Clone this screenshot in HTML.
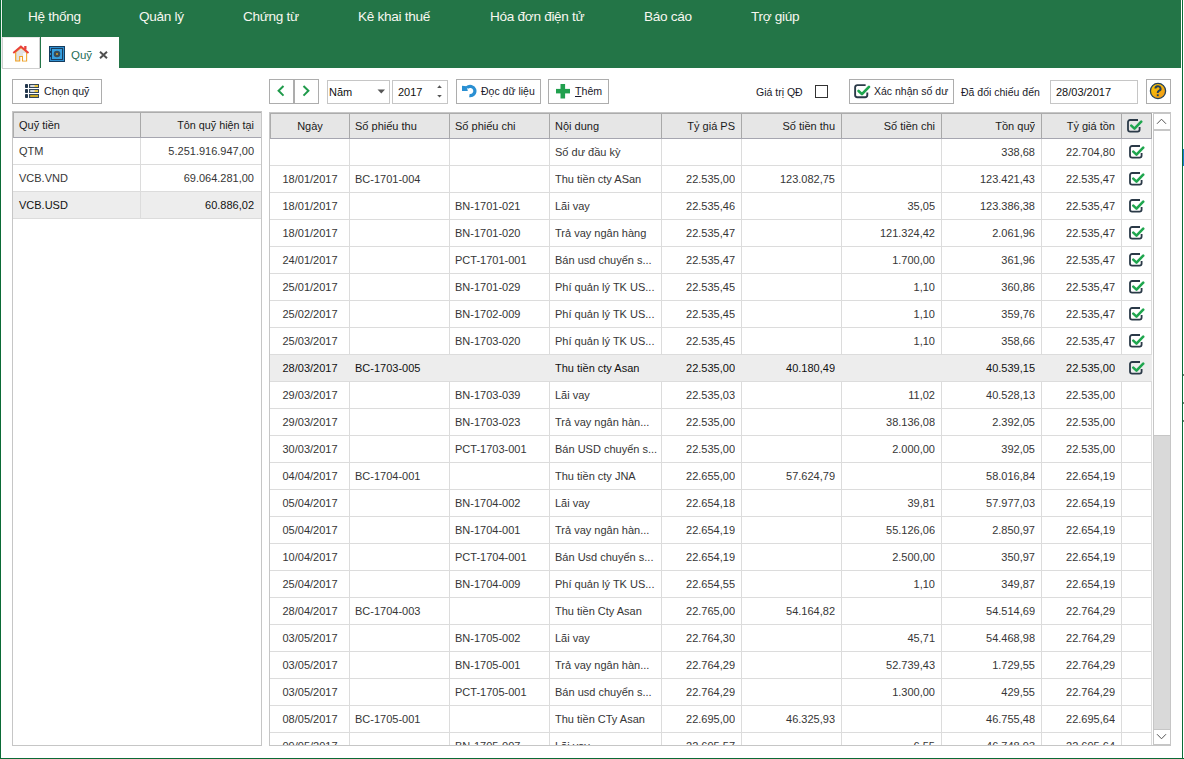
<!DOCTYPE html>
<html><head><meta charset="utf-8">
<style>
*{box-sizing:border-box}
html,body{margin:0;padding:0}
body{width:1184px;height:759px;overflow:hidden;position:relative;background:#fff;font-family:"Liberation Sans",sans-serif;font-size:11px;color:#333}
.a{position:absolute}
.ic{position:absolute;display:block}
.menu{position:absolute;top:9px;font-size:13.6px;letter-spacing:-0.3px;color:#f7f7f0;white-space:nowrap;line-height:16px}
.btn{position:absolute;border:1px solid #adadad;background:#fff;height:25px}
.t{position:absolute;white-space:nowrap;line-height:13px}
.hl{position:absolute;width:1px;background:#a9a9a9}
.vl{position:absolute;width:1px;background:#dcdcdc}
.rl{position:absolute;height:1px;background:#dcdcdc}
.cell{position:absolute;white-space:nowrap;line-height:13px;overflow:hidden}
</style></head><body>

<div class="a" style="left:1px;top:0;width:1px;height:68px;background:#eef0f0"></div>
<div class="a" style="left:2px;top:0;width:1179px;height:68px;background:#237547"></div>
<div class="a" style="left:2px;top:0;width:1px;height:68px;background:#127039"></div>
<div class="menu" style="left:28px">Hệ thống</div>
<div class="menu" style="left:139px">Quản lý</div>
<div class="menu" style="left:243px">Chứng từ</div>
<div class="menu" style="left:358px">Kê khai thuế</div>
<div class="menu" style="left:490px">Hóa đơn điện tử</div>
<div class="menu" style="left:644px">Báo cáo</div>
<div class="menu" style="left:751px">Trợ giúp</div>
<div class="a" style="left:2px;top:37px;width:38px;height:32px;background:#fff;border:1px solid #cfcfcf;border-top-color:#e8e8e8"></div>
<svg class="ic" style="left:10px;top:43px" width="22" height="22" viewBox="0 0 22 22">
<path d="M5.7 9.2V18H9.7V13.5H12.5V18H16.6V9.2L11.1 4.6Z" fill="#e2e2e2" stroke="#f0a020" stroke-width="1.1"/>
<rect x="13.1" y="10" width="3" height="7.5" fill="#fbfbfb"/>
<path d="M3.3 9.9L10.9 3.6L18.5 9.9" stroke="#e8403a" stroke-width="1.9" fill="none"/>
<rect x="14.2" y="3" width="2.3" height="3.6" fill="#e8403a"/>
</svg>
<div class="a" style="left:41px;top:37px;width:78px;height:32px;background:#fff"></div>
<svg class="ic" style="left:49px;top:46px" width="16" height="16" viewBox="0 0 16 16">
<rect x="0.5" y="0.5" width="15" height="15" fill="#2f8fd0" stroke="#153c5e" stroke-width="1"/>
<rect x="2.5" y="2.5" width="11" height="11" fill="#36a0e0" stroke="#1b3d5c" stroke-width="1"/>
<circle cx="8" cy="8" r="3.3" fill="#3a4b58"/>
<circle cx="8" cy="8" r="1.1" fill="#c9a030"/>
<rect x="1" y="5" width="1.5" height="2" fill="#153c5e"/><rect x="1" y="9" width="1.5" height="2" fill="#153c5e"/>
</svg>
<div class="t" style="left:71px;top:49px;font-size:11.5px;color:#1f6e58">Quỹ</div>
<svg class="ic" style="left:99px;top:51px" width="9" height="8" viewBox="0 0 9 8"><path d="M1 0.8L8 7.2M8 0.8L1 7.2" stroke="#505050" stroke-width="2"/></svg>
<div class="btn" style="left:12px;top:79px;width:90px"></div>
<svg class="ic" style="left:25px;top:84px" width="14" height="14" viewBox="0 0 14 14">
<rect x="0" y="0" width="3" height="4" rx="0.8" fill="#22364c"/><rect x="0" y="5" width="3" height="4" rx="0.8" fill="#22364c"/><rect x="0" y="10" width="3" height="4" rx="0.8" fill="#22364c"/>
<rect x="4.6" y="0.6" width="9" height="2.8" fill="#fff" stroke="#34475a" stroke-width="1.2"/><rect x="9.6" y="1.2" width="3.4" height="1.6" fill="#f2c21a"/>
<rect x="4.6" y="5.6" width="9" height="2.8" fill="#fff" stroke="#34475a" stroke-width="1.2"/><rect x="9.6" y="6.2" width="3.4" height="1.6" fill="#f2c21a"/>
<rect x="4.6" y="10.6" width="9" height="2.8" fill="#f2c21a" stroke="#34475a" stroke-width="1.2"/>
</svg>
<div class="t" style="left:44px;top:85px;font-size:10.6px;color:#1a1a2a">Chọn quỹ</div>
<div class="a" style="left:12px;top:111px;width:250px;height:635px;border:1px solid #c6c6c6;background:#fff"></div>
<div class="a" style="left:13px;top:112px;width:248px;height:26px;background:#e6e6e6;border-top:1px solid #acacac;border-left:1px solid #acacac;border-bottom:1px solid #a6a6b0"></div>
<div class="a" style="left:140px;top:113px;width:1px;height:24px;background:#a8a8a8"></div>
<div class="t" style="left:19px;top:119px;color:#1a1a1a">Quỹ tiền</div>
<div class="t" style="left:140px;width:114px;text-align:right;top:119px;color:#1a1a1a;font-size:10.8px">Tôn quỹ hiện tại</div>
<div class="vl" style="left:140px;top:138px;height:26px"></div>
<div class="rl" style="left:13px;top:164px;width:248px"></div>
<div class="t" style="left:19px;top:145px;color:#363636">QTM</div>
<div class="t" style="left:141px;width:113px;text-align:right;top:145px;color:#363636">5.251.916.947,00</div>
<div class="vl" style="left:140px;top:165px;height:26px"></div>
<div class="rl" style="left:13px;top:191px;width:248px"></div>
<div class="t" style="left:19px;top:172px;color:#363636">VCB.VND</div>
<div class="t" style="left:141px;width:113px;text-align:right;top:172px;color:#363636">69.064.281,00</div>
<div class="a" style="left:13px;top:192px;width:248px;height:26px;background:#ededed"></div>
<div class="vl" style="left:140px;top:192px;height:26px"></div>
<div class="rl" style="left:13px;top:218px;width:248px"></div>
<div class="t" style="left:19px;top:199px;color:#111">VCB.USD</div>
<div class="t" style="left:141px;width:113px;text-align:right;top:199px;color:#111">60.886,02</div>
<div class="btn" style="left:269px;top:79px;width:25px"></div>
<div class="btn" style="left:294px;top:79px;width:25px"></div>
<svg class="ic" style="left:277px;top:85px" width="8" height="12" viewBox="0 0 8 12"><path d="M6.5 1L1.6 5.8L6.5 10.6" fill="none" stroke="#1f9a4a" stroke-width="2"/></svg>
<svg class="ic" style="left:302px;top:85px" width="8" height="12" viewBox="0 0 8 12"><path d="M1.5 1L6.4 5.8L1.5 10.6" fill="none" stroke="#1f9a4a" stroke-width="2"/></svg>
<div class="a" style="left:327px;top:80px;width:63px;height:24px;border:1px solid #c6c6c6;background:#fff"></div>
<div class="t" style="left:329px;top:86px;color:#111;font-size:11px">Năm</div>
<svg class="ic" style="left:377px;top:89px" width="9" height="5" viewBox="0 0 9 5"><path d="M0.5 0.5H8L4.25 4.5Z" fill="#555"/></svg>
<div class="a" style="left:392px;top:80px;width:56px;height:24px;border:1px solid #c6c6c6;background:#fff"></div>
<div class="t" style="left:398px;top:86px;color:#111">2017</div>
<svg class="ic" style="left:436px;top:84px" width="7" height="15" viewBox="0 0 7 15"><path d="M1.2 4H5.8L3.5 1.3Z" fill="#555"/><path d="M1.2 11H5.8L3.5 13.6Z" fill="#555"/></svg>
<div class="btn" style="left:456px;top:79px;width:85px"></div>
<svg class="ic" style="left:458px;top:81px" width="20" height="20" viewBox="0 0 20 20">
<path d="M8.88 6.68A4.7 4.7 0 1 1 11.38 14.63" fill="none" stroke="#2a8fd2" stroke-width="3.2"/>
<path d="M4 4.8L8.6 5.2L9.8 10H4Z" fill="#2a8fd2"/>
</svg>
<div class="t" style="left:481px;top:85px;font-size:10.5px;color:#1a1a2a">Đọc dữ liệu</div>
<div class="btn" style="left:548px;top:79px;width:61px"></div>
<svg class="ic" style="left:556px;top:84px" width="14" height="15" viewBox="0 0 14 15">
<rect x="4.5" y="0" width="4.6" height="14.5" fill="#21a04e"/><rect x="0" y="4.9" width="14" height="4.5" fill="#21a04e"/>
</svg>
<div class="t" style="left:575px;top:85px;font-size:10.6px;color:#1a1a2a"><span style="text-decoration:underline">T</span>hêm</div>
<div class="t" style="left:756px;top:86px;font-size:10.5px;color:#1a1a2a">Giá trị QĐ</div>
<div class="a" style="left:815px;top:85px;width:13px;height:13px;border:1px solid #333;background:#fff"></div>
<div class="btn" style="left:849px;top:79px;width:105px"></div>
<svg class="ic" style="left:853px;top:83px" width="17.9" height="16.8" viewBox="0 0 17 16"><path d="M13.6 9V11.5A2.1 2.1 0 0 1 11.5 13.6H4.1A2.1 2.1 0 0 1 2 11.5V4.1A2.1 2.1 0 0 1 4.1 2H12" fill="none" stroke="#2b3a48" stroke-width="1.8"/><path d="M5.3 7.6L8.5 10.6L15.2 3.7" fill="none" stroke="#1fa64e" stroke-width="2.6" stroke-linejoin="round" stroke-linecap="round"/></svg>
<div class="t" style="left:874px;top:85px;font-size:10.5px;color:#1a1a2a">Xác nhận số dư</div>
<div class="t" style="left:961px;top:86px;font-size:10.5px;color:#1a1a2a">Đã đối chiếu đến</div>
<div class="a" style="left:1050px;top:80px;width:88px;height:24px;border:1px solid #c6c6c6;background:#fff"></div>
<div class="t" style="left:1056px;top:86px;color:#111">28/03/2017</div>
<div class="btn" style="left:1146px;top:79px;width:25px"></div>
<svg class="ic" style="left:1149px;top:82px" width="18" height="18" viewBox="0 0 18 18">
<defs><linearGradient id="hg" x1="0" y1="0" x2="1" y2="1"><stop offset="0" stop-color="#f8c800"/><stop offset="1" stop-color="#f0961e"/></linearGradient></defs>
<circle cx="9" cy="9" r="7.6" fill="url(#hg)" stroke="#24405a" stroke-width="1.3"/>
<path d="M6.4 6.6A2.6 2.4 0 1 1 9.8 8.9C9 9.4 8.7 9.9 8.7 11" fill="none" stroke="#24405a" stroke-width="2"/>
<rect x="7.8" y="12.3" width="1.9" height="1.9" fill="#24405a"/>
</svg>
<div class="a" style="left:269px;top:112px;width:902px;height:634px;border:1px solid #c6c6c6;background:#fff"></div>
<div class="a" style="left:270px;top:113px;width:882px;height:26px;background:#e6e6e6;border-top:1px solid #acacac;border-left:1px solid #acacac;border-bottom:1px solid #a6a6b0"></div>
<div class="hl" style="left:349px;top:114px;height:24px"></div>
<div class="cell" style="left:271px;width:78px;text-align:center;top:120px;color:#1a1a1a">Ngày</div>
<div class="hl" style="left:449px;top:114px;height:24px"></div>
<div class="cell" style="left:355px;width:94px;top:120px;color:#1a1a1a">Số phiếu thu</div>
<div class="hl" style="left:549px;top:114px;height:24px"></div>
<div class="cell" style="left:455px;width:94px;top:120px;color:#1a1a1a">Số phiếu chi</div>
<div class="hl" style="left:661px;top:114px;height:24px"></div>
<div class="cell" style="left:555px;width:106px;top:120px;color:#1a1a1a">Nội dung</div>
<div class="hl" style="left:741px;top:114px;height:24px"></div>
<div class="cell" style="left:662px;width:73px;text-align:right;top:120px;color:#1a1a1a">Tỷ giá PS</div>
<div class="hl" style="left:841px;top:114px;height:24px"></div>
<div class="cell" style="left:742px;width:93px;text-align:right;top:120px;color:#1a1a1a">Số tiền thu</div>
<div class="hl" style="left:941px;top:114px;height:24px"></div>
<div class="cell" style="left:842px;width:93px;text-align:right;top:120px;color:#1a1a1a">Số tiền chi</div>
<div class="hl" style="left:1041px;top:114px;height:24px"></div>
<div class="cell" style="left:942px;width:93px;text-align:right;top:120px;color:#1a1a1a">Tồn quỹ</div>
<div class="hl" style="left:1121px;top:114px;height:24px"></div>
<div class="cell" style="left:1042px;width:73px;text-align:right;top:120px;color:#1a1a1a">Tỷ giá tồn</div>
<div class="hl" style="left:1151px;top:114px;height:24px"></div>
<svg class="ic" style="left:1126px;top:118px" width="17.0" height="16.0" viewBox="0 0 17 16"><path d="M13.6 9V11.5A2.1 2.1 0 0 1 11.5 13.6H4.1A2.1 2.1 0 0 1 2 11.5V4.1A2.1 2.1 0 0 1 4.1 2H12" fill="none" stroke="#2b3a48" stroke-width="1.8"/><path d="M5.3 7.6L8.5 10.6L15.2 3.7" fill="none" stroke="#1fa64e" stroke-width="2.6" stroke-linejoin="round" stroke-linecap="round"/></svg>
<div class="vl" style="left:349px;top:139px;height:27px"></div>
<div class="vl" style="left:449px;top:139px;height:27px"></div>
<div class="vl" style="left:549px;top:139px;height:27px"></div>
<div class="vl" style="left:661px;top:139px;height:27px"></div>
<div class="cell" style="left:555px;width:106px;top:146px;color:#363636">Số dư đầu kỳ</div>
<div class="vl" style="left:741px;top:139px;height:27px"></div>
<div class="vl" style="left:841px;top:139px;height:27px"></div>
<div class="vl" style="left:941px;top:139px;height:27px"></div>
<div class="vl" style="left:1041px;top:139px;height:27px"></div>
<div class="cell" style="left:942px;width:93px;text-align:right;top:146px;color:#363636">338,68</div>
<div class="vl" style="left:1121px;top:139px;height:27px"></div>
<div class="cell" style="left:1042px;width:73px;text-align:right;top:146px;color:#363636">22.704,80</div>
<div class="vl" style="left:1151px;top:139px;height:27px"></div>
<svg class="ic" style="left:1128px;top:144px" width="17.0" height="16.0" viewBox="0 0 17 16"><path d="M13.6 9V11.5A2.1 2.1 0 0 1 11.5 13.6H4.1A2.1 2.1 0 0 1 2 11.5V4.1A2.1 2.1 0 0 1 4.1 2H12" fill="none" stroke="#2b3a48" stroke-width="1.8"/><path d="M5.3 7.6L8.5 10.6L15.2 3.7" fill="none" stroke="#1fa64e" stroke-width="2.6" stroke-linejoin="round" stroke-linecap="round"/></svg>
<div class="rl" style="left:270px;top:165px;width:882px"></div>
<div class="vl" style="left:349px;top:166px;height:27px"></div>
<div class="cell" style="left:271px;width:78px;text-align:center;top:173px;color:#363636">18/01/2017</div>
<div class="vl" style="left:449px;top:166px;height:27px"></div>
<div class="cell" style="left:355px;width:94px;top:173px;color:#363636">BC-1701-004</div>
<div class="vl" style="left:549px;top:166px;height:27px"></div>
<div class="vl" style="left:661px;top:166px;height:27px"></div>
<div class="cell" style="left:555px;width:106px;top:173px;color:#363636">Thu tiền cty ASan</div>
<div class="vl" style="left:741px;top:166px;height:27px"></div>
<div class="cell" style="left:662px;width:73px;text-align:right;top:173px;color:#363636">22.535,00</div>
<div class="vl" style="left:841px;top:166px;height:27px"></div>
<div class="cell" style="left:742px;width:93px;text-align:right;top:173px;color:#363636">123.082,75</div>
<div class="vl" style="left:941px;top:166px;height:27px"></div>
<div class="vl" style="left:1041px;top:166px;height:27px"></div>
<div class="cell" style="left:942px;width:93px;text-align:right;top:173px;color:#363636">123.421,43</div>
<div class="vl" style="left:1121px;top:166px;height:27px"></div>
<div class="cell" style="left:1042px;width:73px;text-align:right;top:173px;color:#363636">22.535,47</div>
<div class="vl" style="left:1151px;top:166px;height:27px"></div>
<svg class="ic" style="left:1128px;top:171px" width="17.0" height="16.0" viewBox="0 0 17 16"><path d="M13.6 9V11.5A2.1 2.1 0 0 1 11.5 13.6H4.1A2.1 2.1 0 0 1 2 11.5V4.1A2.1 2.1 0 0 1 4.1 2H12" fill="none" stroke="#2b3a48" stroke-width="1.8"/><path d="M5.3 7.6L8.5 10.6L15.2 3.7" fill="none" stroke="#1fa64e" stroke-width="2.6" stroke-linejoin="round" stroke-linecap="round"/></svg>
<div class="rl" style="left:270px;top:192px;width:882px"></div>
<div class="vl" style="left:349px;top:193px;height:27px"></div>
<div class="cell" style="left:271px;width:78px;text-align:center;top:200px;color:#363636">18/01/2017</div>
<div class="vl" style="left:449px;top:193px;height:27px"></div>
<div class="vl" style="left:549px;top:193px;height:27px"></div>
<div class="cell" style="left:455px;width:94px;top:200px;color:#363636">BN-1701-021</div>
<div class="vl" style="left:661px;top:193px;height:27px"></div>
<div class="cell" style="left:555px;width:106px;top:200px;color:#363636">Lãi vay</div>
<div class="vl" style="left:741px;top:193px;height:27px"></div>
<div class="cell" style="left:662px;width:73px;text-align:right;top:200px;color:#363636">22.535,46</div>
<div class="vl" style="left:841px;top:193px;height:27px"></div>
<div class="vl" style="left:941px;top:193px;height:27px"></div>
<div class="cell" style="left:842px;width:93px;text-align:right;top:200px;color:#363636">35,05</div>
<div class="vl" style="left:1041px;top:193px;height:27px"></div>
<div class="cell" style="left:942px;width:93px;text-align:right;top:200px;color:#363636">123.386,38</div>
<div class="vl" style="left:1121px;top:193px;height:27px"></div>
<div class="cell" style="left:1042px;width:73px;text-align:right;top:200px;color:#363636">22.535,47</div>
<div class="vl" style="left:1151px;top:193px;height:27px"></div>
<svg class="ic" style="left:1128px;top:198px" width="17.0" height="16.0" viewBox="0 0 17 16"><path d="M13.6 9V11.5A2.1 2.1 0 0 1 11.5 13.6H4.1A2.1 2.1 0 0 1 2 11.5V4.1A2.1 2.1 0 0 1 4.1 2H12" fill="none" stroke="#2b3a48" stroke-width="1.8"/><path d="M5.3 7.6L8.5 10.6L15.2 3.7" fill="none" stroke="#1fa64e" stroke-width="2.6" stroke-linejoin="round" stroke-linecap="round"/></svg>
<div class="rl" style="left:270px;top:219px;width:882px"></div>
<div class="vl" style="left:349px;top:220px;height:27px"></div>
<div class="cell" style="left:271px;width:78px;text-align:center;top:227px;color:#363636">18/01/2017</div>
<div class="vl" style="left:449px;top:220px;height:27px"></div>
<div class="vl" style="left:549px;top:220px;height:27px"></div>
<div class="cell" style="left:455px;width:94px;top:227px;color:#363636">BN-1701-020</div>
<div class="vl" style="left:661px;top:220px;height:27px"></div>
<div class="cell" style="left:555px;width:106px;top:227px;color:#363636">Trả vay ngân hàng</div>
<div class="vl" style="left:741px;top:220px;height:27px"></div>
<div class="cell" style="left:662px;width:73px;text-align:right;top:227px;color:#363636">22.535,47</div>
<div class="vl" style="left:841px;top:220px;height:27px"></div>
<div class="vl" style="left:941px;top:220px;height:27px"></div>
<div class="cell" style="left:842px;width:93px;text-align:right;top:227px;color:#363636">121.324,42</div>
<div class="vl" style="left:1041px;top:220px;height:27px"></div>
<div class="cell" style="left:942px;width:93px;text-align:right;top:227px;color:#363636">2.061,96</div>
<div class="vl" style="left:1121px;top:220px;height:27px"></div>
<div class="cell" style="left:1042px;width:73px;text-align:right;top:227px;color:#363636">22.535,47</div>
<div class="vl" style="left:1151px;top:220px;height:27px"></div>
<svg class="ic" style="left:1128px;top:225px" width="17.0" height="16.0" viewBox="0 0 17 16"><path d="M13.6 9V11.5A2.1 2.1 0 0 1 11.5 13.6H4.1A2.1 2.1 0 0 1 2 11.5V4.1A2.1 2.1 0 0 1 4.1 2H12" fill="none" stroke="#2b3a48" stroke-width="1.8"/><path d="M5.3 7.6L8.5 10.6L15.2 3.7" fill="none" stroke="#1fa64e" stroke-width="2.6" stroke-linejoin="round" stroke-linecap="round"/></svg>
<div class="rl" style="left:270px;top:246px;width:882px"></div>
<div class="vl" style="left:349px;top:247px;height:27px"></div>
<div class="cell" style="left:271px;width:78px;text-align:center;top:254px;color:#363636">24/01/2017</div>
<div class="vl" style="left:449px;top:247px;height:27px"></div>
<div class="vl" style="left:549px;top:247px;height:27px"></div>
<div class="cell" style="left:455px;width:94px;top:254px;color:#363636">PCT-1701-001</div>
<div class="vl" style="left:661px;top:247px;height:27px"></div>
<div class="cell" style="left:555px;width:106px;top:254px;color:#363636">Bán usd chuyển s...</div>
<div class="vl" style="left:741px;top:247px;height:27px"></div>
<div class="cell" style="left:662px;width:73px;text-align:right;top:254px;color:#363636">22.535,47</div>
<div class="vl" style="left:841px;top:247px;height:27px"></div>
<div class="vl" style="left:941px;top:247px;height:27px"></div>
<div class="cell" style="left:842px;width:93px;text-align:right;top:254px;color:#363636">1.700,00</div>
<div class="vl" style="left:1041px;top:247px;height:27px"></div>
<div class="cell" style="left:942px;width:93px;text-align:right;top:254px;color:#363636">361,96</div>
<div class="vl" style="left:1121px;top:247px;height:27px"></div>
<div class="cell" style="left:1042px;width:73px;text-align:right;top:254px;color:#363636">22.535,47</div>
<div class="vl" style="left:1151px;top:247px;height:27px"></div>
<svg class="ic" style="left:1128px;top:252px" width="17.0" height="16.0" viewBox="0 0 17 16"><path d="M13.6 9V11.5A2.1 2.1 0 0 1 11.5 13.6H4.1A2.1 2.1 0 0 1 2 11.5V4.1A2.1 2.1 0 0 1 4.1 2H12" fill="none" stroke="#2b3a48" stroke-width="1.8"/><path d="M5.3 7.6L8.5 10.6L15.2 3.7" fill="none" stroke="#1fa64e" stroke-width="2.6" stroke-linejoin="round" stroke-linecap="round"/></svg>
<div class="rl" style="left:270px;top:273px;width:882px"></div>
<div class="vl" style="left:349px;top:274px;height:27px"></div>
<div class="cell" style="left:271px;width:78px;text-align:center;top:281px;color:#363636">25/01/2017</div>
<div class="vl" style="left:449px;top:274px;height:27px"></div>
<div class="vl" style="left:549px;top:274px;height:27px"></div>
<div class="cell" style="left:455px;width:94px;top:281px;color:#363636">BN-1701-029</div>
<div class="vl" style="left:661px;top:274px;height:27px"></div>
<div class="cell" style="left:555px;width:106px;top:281px;color:#363636">Phí quản lý TK US...</div>
<div class="vl" style="left:741px;top:274px;height:27px"></div>
<div class="cell" style="left:662px;width:73px;text-align:right;top:281px;color:#363636">22.535,45</div>
<div class="vl" style="left:841px;top:274px;height:27px"></div>
<div class="vl" style="left:941px;top:274px;height:27px"></div>
<div class="cell" style="left:842px;width:93px;text-align:right;top:281px;color:#363636">1,10</div>
<div class="vl" style="left:1041px;top:274px;height:27px"></div>
<div class="cell" style="left:942px;width:93px;text-align:right;top:281px;color:#363636">360,86</div>
<div class="vl" style="left:1121px;top:274px;height:27px"></div>
<div class="cell" style="left:1042px;width:73px;text-align:right;top:281px;color:#363636">22.535,47</div>
<div class="vl" style="left:1151px;top:274px;height:27px"></div>
<svg class="ic" style="left:1128px;top:279px" width="17.0" height="16.0" viewBox="0 0 17 16"><path d="M13.6 9V11.5A2.1 2.1 0 0 1 11.5 13.6H4.1A2.1 2.1 0 0 1 2 11.5V4.1A2.1 2.1 0 0 1 4.1 2H12" fill="none" stroke="#2b3a48" stroke-width="1.8"/><path d="M5.3 7.6L8.5 10.6L15.2 3.7" fill="none" stroke="#1fa64e" stroke-width="2.6" stroke-linejoin="round" stroke-linecap="round"/></svg>
<div class="rl" style="left:270px;top:300px;width:882px"></div>
<div class="vl" style="left:349px;top:301px;height:27px"></div>
<div class="cell" style="left:271px;width:78px;text-align:center;top:308px;color:#363636">25/02/2017</div>
<div class="vl" style="left:449px;top:301px;height:27px"></div>
<div class="vl" style="left:549px;top:301px;height:27px"></div>
<div class="cell" style="left:455px;width:94px;top:308px;color:#363636">BN-1702-009</div>
<div class="vl" style="left:661px;top:301px;height:27px"></div>
<div class="cell" style="left:555px;width:106px;top:308px;color:#363636">Phí quản lý TK US...</div>
<div class="vl" style="left:741px;top:301px;height:27px"></div>
<div class="cell" style="left:662px;width:73px;text-align:right;top:308px;color:#363636">22.535,45</div>
<div class="vl" style="left:841px;top:301px;height:27px"></div>
<div class="vl" style="left:941px;top:301px;height:27px"></div>
<div class="cell" style="left:842px;width:93px;text-align:right;top:308px;color:#363636">1,10</div>
<div class="vl" style="left:1041px;top:301px;height:27px"></div>
<div class="cell" style="left:942px;width:93px;text-align:right;top:308px;color:#363636">359,76</div>
<div class="vl" style="left:1121px;top:301px;height:27px"></div>
<div class="cell" style="left:1042px;width:73px;text-align:right;top:308px;color:#363636">22.535,47</div>
<div class="vl" style="left:1151px;top:301px;height:27px"></div>
<svg class="ic" style="left:1128px;top:306px" width="17.0" height="16.0" viewBox="0 0 17 16"><path d="M13.6 9V11.5A2.1 2.1 0 0 1 11.5 13.6H4.1A2.1 2.1 0 0 1 2 11.5V4.1A2.1 2.1 0 0 1 4.1 2H12" fill="none" stroke="#2b3a48" stroke-width="1.8"/><path d="M5.3 7.6L8.5 10.6L15.2 3.7" fill="none" stroke="#1fa64e" stroke-width="2.6" stroke-linejoin="round" stroke-linecap="round"/></svg>
<div class="rl" style="left:270px;top:327px;width:882px"></div>
<div class="vl" style="left:349px;top:328px;height:27px"></div>
<div class="cell" style="left:271px;width:78px;text-align:center;top:335px;color:#363636">25/03/2017</div>
<div class="vl" style="left:449px;top:328px;height:27px"></div>
<div class="vl" style="left:549px;top:328px;height:27px"></div>
<div class="cell" style="left:455px;width:94px;top:335px;color:#363636">BN-1703-020</div>
<div class="vl" style="left:661px;top:328px;height:27px"></div>
<div class="cell" style="left:555px;width:106px;top:335px;color:#363636">Phí quản lý TK US...</div>
<div class="vl" style="left:741px;top:328px;height:27px"></div>
<div class="cell" style="left:662px;width:73px;text-align:right;top:335px;color:#363636">22.535,45</div>
<div class="vl" style="left:841px;top:328px;height:27px"></div>
<div class="vl" style="left:941px;top:328px;height:27px"></div>
<div class="cell" style="left:842px;width:93px;text-align:right;top:335px;color:#363636">1,10</div>
<div class="vl" style="left:1041px;top:328px;height:27px"></div>
<div class="cell" style="left:942px;width:93px;text-align:right;top:335px;color:#363636">358,66</div>
<div class="vl" style="left:1121px;top:328px;height:27px"></div>
<div class="cell" style="left:1042px;width:73px;text-align:right;top:335px;color:#363636">22.535,47</div>
<div class="vl" style="left:1151px;top:328px;height:27px"></div>
<svg class="ic" style="left:1128px;top:333px" width="17.0" height="16.0" viewBox="0 0 17 16"><path d="M13.6 9V11.5A2.1 2.1 0 0 1 11.5 13.6H4.1A2.1 2.1 0 0 1 2 11.5V4.1A2.1 2.1 0 0 1 4.1 2H12" fill="none" stroke="#2b3a48" stroke-width="1.8"/><path d="M5.3 7.6L8.5 10.6L15.2 3.7" fill="none" stroke="#1fa64e" stroke-width="2.6" stroke-linejoin="round" stroke-linecap="round"/></svg>
<div class="rl" style="left:270px;top:354px;width:882px"></div>
<div class="a" style="left:270px;top:355px;width:882px;height:26px;background:#ededed"></div>
<div class="vl" style="left:349px;top:355px;height:27px;background:#ededed"></div>
<div class="cell" style="left:271px;width:78px;text-align:center;top:362px;color:#111">28/03/2017</div>
<div class="vl" style="left:449px;top:355px;height:27px;background:#ededed"></div>
<div class="cell" style="left:355px;width:94px;top:362px;color:#111">BC-1703-005</div>
<div class="vl" style="left:549px;top:355px;height:27px;background:#ededed"></div>
<div class="vl" style="left:661px;top:355px;height:27px;background:#ededed"></div>
<div class="cell" style="left:555px;width:106px;top:362px;color:#111">Thu tiền cty Asan</div>
<div class="vl" style="left:741px;top:355px;height:27px;background:#ededed"></div>
<div class="cell" style="left:662px;width:73px;text-align:right;top:362px;color:#111">22.535,00</div>
<div class="vl" style="left:841px;top:355px;height:27px;background:#ededed"></div>
<div class="cell" style="left:742px;width:93px;text-align:right;top:362px;color:#111">40.180,49</div>
<div class="vl" style="left:941px;top:355px;height:27px;background:#ededed"></div>
<div class="vl" style="left:1041px;top:355px;height:27px;background:#ededed"></div>
<div class="cell" style="left:942px;width:93px;text-align:right;top:362px;color:#111">40.539,15</div>
<div class="vl" style="left:1121px;top:355px;height:27px;background:#ededed"></div>
<div class="cell" style="left:1042px;width:73px;text-align:right;top:362px;color:#111">22.535,00</div>
<div class="vl" style="left:1151px;top:355px;height:27px;background:#ededed"></div>
<svg class="ic" style="left:1128px;top:360px" width="17.0" height="16.0" viewBox="0 0 17 16"><path d="M13.6 9V11.5A2.1 2.1 0 0 1 11.5 13.6H4.1A2.1 2.1 0 0 1 2 11.5V4.1A2.1 2.1 0 0 1 4.1 2H12" fill="none" stroke="#2b3a48" stroke-width="1.8"/><path d="M5.3 7.6L8.5 10.6L15.2 3.7" fill="none" stroke="#1fa64e" stroke-width="2.6" stroke-linejoin="round" stroke-linecap="round"/></svg>
<div class="rl" style="left:270px;top:381px;width:882px"></div>
<div class="vl" style="left:349px;top:382px;height:27px"></div>
<div class="cell" style="left:271px;width:78px;text-align:center;top:389px;color:#363636">29/03/2017</div>
<div class="vl" style="left:449px;top:382px;height:27px"></div>
<div class="vl" style="left:549px;top:382px;height:27px"></div>
<div class="cell" style="left:455px;width:94px;top:389px;color:#363636">BN-1703-039</div>
<div class="vl" style="left:661px;top:382px;height:27px"></div>
<div class="cell" style="left:555px;width:106px;top:389px;color:#363636">Lãi vay</div>
<div class="vl" style="left:741px;top:382px;height:27px"></div>
<div class="cell" style="left:662px;width:73px;text-align:right;top:389px;color:#363636">22.535,03</div>
<div class="vl" style="left:841px;top:382px;height:27px"></div>
<div class="vl" style="left:941px;top:382px;height:27px"></div>
<div class="cell" style="left:842px;width:93px;text-align:right;top:389px;color:#363636">11,02</div>
<div class="vl" style="left:1041px;top:382px;height:27px"></div>
<div class="cell" style="left:942px;width:93px;text-align:right;top:389px;color:#363636">40.528,13</div>
<div class="vl" style="left:1121px;top:382px;height:27px"></div>
<div class="cell" style="left:1042px;width:73px;text-align:right;top:389px;color:#363636">22.535,00</div>
<div class="vl" style="left:1151px;top:382px;height:27px"></div>
<div class="rl" style="left:270px;top:408px;width:882px"></div>
<div class="vl" style="left:349px;top:409px;height:27px"></div>
<div class="cell" style="left:271px;width:78px;text-align:center;top:416px;color:#363636">29/03/2017</div>
<div class="vl" style="left:449px;top:409px;height:27px"></div>
<div class="vl" style="left:549px;top:409px;height:27px"></div>
<div class="cell" style="left:455px;width:94px;top:416px;color:#363636">BN-1703-023</div>
<div class="vl" style="left:661px;top:409px;height:27px"></div>
<div class="cell" style="left:555px;width:106px;top:416px;color:#363636">Trả vay ngân hàn...</div>
<div class="vl" style="left:741px;top:409px;height:27px"></div>
<div class="cell" style="left:662px;width:73px;text-align:right;top:416px;color:#363636">22.535,00</div>
<div class="vl" style="left:841px;top:409px;height:27px"></div>
<div class="vl" style="left:941px;top:409px;height:27px"></div>
<div class="cell" style="left:842px;width:93px;text-align:right;top:416px;color:#363636">38.136,08</div>
<div class="vl" style="left:1041px;top:409px;height:27px"></div>
<div class="cell" style="left:942px;width:93px;text-align:right;top:416px;color:#363636">2.392,05</div>
<div class="vl" style="left:1121px;top:409px;height:27px"></div>
<div class="cell" style="left:1042px;width:73px;text-align:right;top:416px;color:#363636">22.535,00</div>
<div class="vl" style="left:1151px;top:409px;height:27px"></div>
<div class="rl" style="left:270px;top:435px;width:882px"></div>
<div class="vl" style="left:349px;top:436px;height:27px"></div>
<div class="cell" style="left:271px;width:78px;text-align:center;top:443px;color:#363636">30/03/2017</div>
<div class="vl" style="left:449px;top:436px;height:27px"></div>
<div class="vl" style="left:549px;top:436px;height:27px"></div>
<div class="cell" style="left:455px;width:94px;top:443px;color:#363636">PCT-1703-001</div>
<div class="vl" style="left:661px;top:436px;height:27px"></div>
<div class="cell" style="left:555px;width:106px;top:443px;color:#363636">Bán USD chuyển s...</div>
<div class="vl" style="left:741px;top:436px;height:27px"></div>
<div class="cell" style="left:662px;width:73px;text-align:right;top:443px;color:#363636">22.535,00</div>
<div class="vl" style="left:841px;top:436px;height:27px"></div>
<div class="vl" style="left:941px;top:436px;height:27px"></div>
<div class="cell" style="left:842px;width:93px;text-align:right;top:443px;color:#363636">2.000,00</div>
<div class="vl" style="left:1041px;top:436px;height:27px"></div>
<div class="cell" style="left:942px;width:93px;text-align:right;top:443px;color:#363636">392,05</div>
<div class="vl" style="left:1121px;top:436px;height:27px"></div>
<div class="cell" style="left:1042px;width:73px;text-align:right;top:443px;color:#363636">22.535,00</div>
<div class="vl" style="left:1151px;top:436px;height:27px"></div>
<div class="rl" style="left:270px;top:462px;width:882px"></div>
<div class="vl" style="left:349px;top:463px;height:27px"></div>
<div class="cell" style="left:271px;width:78px;text-align:center;top:470px;color:#363636">04/04/2017</div>
<div class="vl" style="left:449px;top:463px;height:27px"></div>
<div class="cell" style="left:355px;width:94px;top:470px;color:#363636">BC-1704-001</div>
<div class="vl" style="left:549px;top:463px;height:27px"></div>
<div class="vl" style="left:661px;top:463px;height:27px"></div>
<div class="cell" style="left:555px;width:106px;top:470px;color:#363636">Thu tiền cty JNA</div>
<div class="vl" style="left:741px;top:463px;height:27px"></div>
<div class="cell" style="left:662px;width:73px;text-align:right;top:470px;color:#363636">22.655,00</div>
<div class="vl" style="left:841px;top:463px;height:27px"></div>
<div class="cell" style="left:742px;width:93px;text-align:right;top:470px;color:#363636">57.624,79</div>
<div class="vl" style="left:941px;top:463px;height:27px"></div>
<div class="vl" style="left:1041px;top:463px;height:27px"></div>
<div class="cell" style="left:942px;width:93px;text-align:right;top:470px;color:#363636">58.016,84</div>
<div class="vl" style="left:1121px;top:463px;height:27px"></div>
<div class="cell" style="left:1042px;width:73px;text-align:right;top:470px;color:#363636">22.654,19</div>
<div class="vl" style="left:1151px;top:463px;height:27px"></div>
<div class="rl" style="left:270px;top:489px;width:882px"></div>
<div class="vl" style="left:349px;top:490px;height:27px"></div>
<div class="cell" style="left:271px;width:78px;text-align:center;top:497px;color:#363636">05/04/2017</div>
<div class="vl" style="left:449px;top:490px;height:27px"></div>
<div class="vl" style="left:549px;top:490px;height:27px"></div>
<div class="cell" style="left:455px;width:94px;top:497px;color:#363636">BN-1704-002</div>
<div class="vl" style="left:661px;top:490px;height:27px"></div>
<div class="cell" style="left:555px;width:106px;top:497px;color:#363636">Lãi vay</div>
<div class="vl" style="left:741px;top:490px;height:27px"></div>
<div class="cell" style="left:662px;width:73px;text-align:right;top:497px;color:#363636">22.654,18</div>
<div class="vl" style="left:841px;top:490px;height:27px"></div>
<div class="vl" style="left:941px;top:490px;height:27px"></div>
<div class="cell" style="left:842px;width:93px;text-align:right;top:497px;color:#363636">39,81</div>
<div class="vl" style="left:1041px;top:490px;height:27px"></div>
<div class="cell" style="left:942px;width:93px;text-align:right;top:497px;color:#363636">57.977,03</div>
<div class="vl" style="left:1121px;top:490px;height:27px"></div>
<div class="cell" style="left:1042px;width:73px;text-align:right;top:497px;color:#363636">22.654,19</div>
<div class="vl" style="left:1151px;top:490px;height:27px"></div>
<div class="rl" style="left:270px;top:516px;width:882px"></div>
<div class="vl" style="left:349px;top:517px;height:27px"></div>
<div class="cell" style="left:271px;width:78px;text-align:center;top:524px;color:#363636">05/04/2017</div>
<div class="vl" style="left:449px;top:517px;height:27px"></div>
<div class="vl" style="left:549px;top:517px;height:27px"></div>
<div class="cell" style="left:455px;width:94px;top:524px;color:#363636">BN-1704-001</div>
<div class="vl" style="left:661px;top:517px;height:27px"></div>
<div class="cell" style="left:555px;width:106px;top:524px;color:#363636">Trả vay ngân hàn...</div>
<div class="vl" style="left:741px;top:517px;height:27px"></div>
<div class="cell" style="left:662px;width:73px;text-align:right;top:524px;color:#363636">22.654,19</div>
<div class="vl" style="left:841px;top:517px;height:27px"></div>
<div class="vl" style="left:941px;top:517px;height:27px"></div>
<div class="cell" style="left:842px;width:93px;text-align:right;top:524px;color:#363636">55.126,06</div>
<div class="vl" style="left:1041px;top:517px;height:27px"></div>
<div class="cell" style="left:942px;width:93px;text-align:right;top:524px;color:#363636">2.850,97</div>
<div class="vl" style="left:1121px;top:517px;height:27px"></div>
<div class="cell" style="left:1042px;width:73px;text-align:right;top:524px;color:#363636">22.654,19</div>
<div class="vl" style="left:1151px;top:517px;height:27px"></div>
<div class="rl" style="left:270px;top:543px;width:882px"></div>
<div class="vl" style="left:349px;top:544px;height:27px"></div>
<div class="cell" style="left:271px;width:78px;text-align:center;top:551px;color:#363636">10/04/2017</div>
<div class="vl" style="left:449px;top:544px;height:27px"></div>
<div class="vl" style="left:549px;top:544px;height:27px"></div>
<div class="cell" style="left:455px;width:94px;top:551px;color:#363636">PCT-1704-001</div>
<div class="vl" style="left:661px;top:544px;height:27px"></div>
<div class="cell" style="left:555px;width:106px;top:551px;color:#363636">Bán Usd chuyển s...</div>
<div class="vl" style="left:741px;top:544px;height:27px"></div>
<div class="cell" style="left:662px;width:73px;text-align:right;top:551px;color:#363636">22.654,19</div>
<div class="vl" style="left:841px;top:544px;height:27px"></div>
<div class="vl" style="left:941px;top:544px;height:27px"></div>
<div class="cell" style="left:842px;width:93px;text-align:right;top:551px;color:#363636">2.500,00</div>
<div class="vl" style="left:1041px;top:544px;height:27px"></div>
<div class="cell" style="left:942px;width:93px;text-align:right;top:551px;color:#363636">350,97</div>
<div class="vl" style="left:1121px;top:544px;height:27px"></div>
<div class="cell" style="left:1042px;width:73px;text-align:right;top:551px;color:#363636">22.654,19</div>
<div class="vl" style="left:1151px;top:544px;height:27px"></div>
<div class="rl" style="left:270px;top:570px;width:882px"></div>
<div class="vl" style="left:349px;top:571px;height:27px"></div>
<div class="cell" style="left:271px;width:78px;text-align:center;top:578px;color:#363636">25/04/2017</div>
<div class="vl" style="left:449px;top:571px;height:27px"></div>
<div class="vl" style="left:549px;top:571px;height:27px"></div>
<div class="cell" style="left:455px;width:94px;top:578px;color:#363636">BN-1704-009</div>
<div class="vl" style="left:661px;top:571px;height:27px"></div>
<div class="cell" style="left:555px;width:106px;top:578px;color:#363636">Phí quản lý TK US...</div>
<div class="vl" style="left:741px;top:571px;height:27px"></div>
<div class="cell" style="left:662px;width:73px;text-align:right;top:578px;color:#363636">22.654,55</div>
<div class="vl" style="left:841px;top:571px;height:27px"></div>
<div class="vl" style="left:941px;top:571px;height:27px"></div>
<div class="cell" style="left:842px;width:93px;text-align:right;top:578px;color:#363636">1,10</div>
<div class="vl" style="left:1041px;top:571px;height:27px"></div>
<div class="cell" style="left:942px;width:93px;text-align:right;top:578px;color:#363636">349,87</div>
<div class="vl" style="left:1121px;top:571px;height:27px"></div>
<div class="cell" style="left:1042px;width:73px;text-align:right;top:578px;color:#363636">22.654,19</div>
<div class="vl" style="left:1151px;top:571px;height:27px"></div>
<div class="rl" style="left:270px;top:597px;width:882px"></div>
<div class="vl" style="left:349px;top:598px;height:27px"></div>
<div class="cell" style="left:271px;width:78px;text-align:center;top:605px;color:#363636">28/04/2017</div>
<div class="vl" style="left:449px;top:598px;height:27px"></div>
<div class="cell" style="left:355px;width:94px;top:605px;color:#363636">BC-1704-003</div>
<div class="vl" style="left:549px;top:598px;height:27px"></div>
<div class="vl" style="left:661px;top:598px;height:27px"></div>
<div class="cell" style="left:555px;width:106px;top:605px;color:#363636">Thu tiền Cty Asan</div>
<div class="vl" style="left:741px;top:598px;height:27px"></div>
<div class="cell" style="left:662px;width:73px;text-align:right;top:605px;color:#363636">22.765,00</div>
<div class="vl" style="left:841px;top:598px;height:27px"></div>
<div class="cell" style="left:742px;width:93px;text-align:right;top:605px;color:#363636">54.164,82</div>
<div class="vl" style="left:941px;top:598px;height:27px"></div>
<div class="vl" style="left:1041px;top:598px;height:27px"></div>
<div class="cell" style="left:942px;width:93px;text-align:right;top:605px;color:#363636">54.514,69</div>
<div class="vl" style="left:1121px;top:598px;height:27px"></div>
<div class="cell" style="left:1042px;width:73px;text-align:right;top:605px;color:#363636">22.764,29</div>
<div class="vl" style="left:1151px;top:598px;height:27px"></div>
<div class="rl" style="left:270px;top:624px;width:882px"></div>
<div class="vl" style="left:349px;top:625px;height:27px"></div>
<div class="cell" style="left:271px;width:78px;text-align:center;top:632px;color:#363636">03/05/2017</div>
<div class="vl" style="left:449px;top:625px;height:27px"></div>
<div class="vl" style="left:549px;top:625px;height:27px"></div>
<div class="cell" style="left:455px;width:94px;top:632px;color:#363636">BN-1705-002</div>
<div class="vl" style="left:661px;top:625px;height:27px"></div>
<div class="cell" style="left:555px;width:106px;top:632px;color:#363636">Lãi vay</div>
<div class="vl" style="left:741px;top:625px;height:27px"></div>
<div class="cell" style="left:662px;width:73px;text-align:right;top:632px;color:#363636">22.764,30</div>
<div class="vl" style="left:841px;top:625px;height:27px"></div>
<div class="vl" style="left:941px;top:625px;height:27px"></div>
<div class="cell" style="left:842px;width:93px;text-align:right;top:632px;color:#363636">45,71</div>
<div class="vl" style="left:1041px;top:625px;height:27px"></div>
<div class="cell" style="left:942px;width:93px;text-align:right;top:632px;color:#363636">54.468,98</div>
<div class="vl" style="left:1121px;top:625px;height:27px"></div>
<div class="cell" style="left:1042px;width:73px;text-align:right;top:632px;color:#363636">22.764,29</div>
<div class="vl" style="left:1151px;top:625px;height:27px"></div>
<div class="rl" style="left:270px;top:651px;width:882px"></div>
<div class="vl" style="left:349px;top:652px;height:27px"></div>
<div class="cell" style="left:271px;width:78px;text-align:center;top:659px;color:#363636">03/05/2017</div>
<div class="vl" style="left:449px;top:652px;height:27px"></div>
<div class="vl" style="left:549px;top:652px;height:27px"></div>
<div class="cell" style="left:455px;width:94px;top:659px;color:#363636">BN-1705-001</div>
<div class="vl" style="left:661px;top:652px;height:27px"></div>
<div class="cell" style="left:555px;width:106px;top:659px;color:#363636">Trả vay ngân hàn...</div>
<div class="vl" style="left:741px;top:652px;height:27px"></div>
<div class="cell" style="left:662px;width:73px;text-align:right;top:659px;color:#363636">22.764,29</div>
<div class="vl" style="left:841px;top:652px;height:27px"></div>
<div class="vl" style="left:941px;top:652px;height:27px"></div>
<div class="cell" style="left:842px;width:93px;text-align:right;top:659px;color:#363636">52.739,43</div>
<div class="vl" style="left:1041px;top:652px;height:27px"></div>
<div class="cell" style="left:942px;width:93px;text-align:right;top:659px;color:#363636">1.729,55</div>
<div class="vl" style="left:1121px;top:652px;height:27px"></div>
<div class="cell" style="left:1042px;width:73px;text-align:right;top:659px;color:#363636">22.764,29</div>
<div class="vl" style="left:1151px;top:652px;height:27px"></div>
<div class="rl" style="left:270px;top:678px;width:882px"></div>
<div class="vl" style="left:349px;top:679px;height:27px"></div>
<div class="cell" style="left:271px;width:78px;text-align:center;top:686px;color:#363636">03/05/2017</div>
<div class="vl" style="left:449px;top:679px;height:27px"></div>
<div class="vl" style="left:549px;top:679px;height:27px"></div>
<div class="cell" style="left:455px;width:94px;top:686px;color:#363636">PCT-1705-001</div>
<div class="vl" style="left:661px;top:679px;height:27px"></div>
<div class="cell" style="left:555px;width:106px;top:686px;color:#363636">Bán usd chuyển s...</div>
<div class="vl" style="left:741px;top:679px;height:27px"></div>
<div class="cell" style="left:662px;width:73px;text-align:right;top:686px;color:#363636">22.764,29</div>
<div class="vl" style="left:841px;top:679px;height:27px"></div>
<div class="vl" style="left:941px;top:679px;height:27px"></div>
<div class="cell" style="left:842px;width:93px;text-align:right;top:686px;color:#363636">1.300,00</div>
<div class="vl" style="left:1041px;top:679px;height:27px"></div>
<div class="cell" style="left:942px;width:93px;text-align:right;top:686px;color:#363636">429,55</div>
<div class="vl" style="left:1121px;top:679px;height:27px"></div>
<div class="cell" style="left:1042px;width:73px;text-align:right;top:686px;color:#363636">22.764,29</div>
<div class="vl" style="left:1151px;top:679px;height:27px"></div>
<div class="rl" style="left:270px;top:705px;width:882px"></div>
<div class="vl" style="left:349px;top:706px;height:27px"></div>
<div class="cell" style="left:271px;width:78px;text-align:center;top:713px;color:#363636">08/05/2017</div>
<div class="vl" style="left:449px;top:706px;height:27px"></div>
<div class="cell" style="left:355px;width:94px;top:713px;color:#363636">BC-1705-001</div>
<div class="vl" style="left:549px;top:706px;height:27px"></div>
<div class="vl" style="left:661px;top:706px;height:27px"></div>
<div class="cell" style="left:555px;width:106px;top:713px;color:#363636">Thu tiền CTy Asan</div>
<div class="vl" style="left:741px;top:706px;height:27px"></div>
<div class="cell" style="left:662px;width:73px;text-align:right;top:713px;color:#363636">22.695,00</div>
<div class="vl" style="left:841px;top:706px;height:27px"></div>
<div class="cell" style="left:742px;width:93px;text-align:right;top:713px;color:#363636">46.325,93</div>
<div class="vl" style="left:941px;top:706px;height:27px"></div>
<div class="vl" style="left:1041px;top:706px;height:27px"></div>
<div class="cell" style="left:942px;width:93px;text-align:right;top:713px;color:#363636">46.755,48</div>
<div class="vl" style="left:1121px;top:706px;height:27px"></div>
<div class="cell" style="left:1042px;width:73px;text-align:right;top:713px;color:#363636">22.695,64</div>
<div class="vl" style="left:1151px;top:706px;height:27px"></div>
<div class="rl" style="left:270px;top:732px;width:882px"></div>
<div class="vl" style="left:349px;top:733px;height:27px"></div>
<div class="cell" style="left:271px;width:78px;text-align:center;top:740px;color:#363636">09/05/2017</div>
<div class="vl" style="left:449px;top:733px;height:27px"></div>
<div class="vl" style="left:549px;top:733px;height:27px"></div>
<div class="cell" style="left:455px;width:94px;top:740px;color:#363636">BN-1705-007</div>
<div class="vl" style="left:661px;top:733px;height:27px"></div>
<div class="cell" style="left:555px;width:106px;top:740px;color:#363636">Lãi vay</div>
<div class="vl" style="left:741px;top:733px;height:27px"></div>
<div class="cell" style="left:662px;width:73px;text-align:right;top:740px;color:#363636">22.695,57</div>
<div class="vl" style="left:841px;top:733px;height:27px"></div>
<div class="vl" style="left:941px;top:733px;height:27px"></div>
<div class="cell" style="left:842px;width:93px;text-align:right;top:740px;color:#363636">6,55</div>
<div class="vl" style="left:1041px;top:733px;height:27px"></div>
<div class="cell" style="left:942px;width:93px;text-align:right;top:740px;color:#363636">46.748,93</div>
<div class="vl" style="left:1121px;top:733px;height:27px"></div>
<div class="cell" style="left:1042px;width:73px;text-align:right;top:740px;color:#363636">22.695,64</div>
<div class="vl" style="left:1151px;top:733px;height:27px"></div>
<div class="rl" style="left:270px;top:759px;width:882px"></div>
<div class="a" style="left:269px;top:745px;width:902px;height:14px;background:#fff"></div>
<div class="a" style="left:269px;top:745px;width:902px;height:1px;background:#c6c6c6"></div>
<div class="a" style="left:1152px;top:113px;width:1px;height:632px;background:#fff"></div>
<div class="a" style="left:1153px;top:112px;width:18px;height:634px;background:#d9d9d9;border:1px solid #c6c6c6"></div>
<div class="a" style="left:1153px;top:112px;width:18px;height:19px;background:#fff;border:1px solid #c6c6c6;border-width:2px 1px 2px 1px"></div>
<div class="a" style="left:1153px;top:130px;width:18px;height:306px;background:#fff;border:1px solid #c6c6c6"></div>
<div class="a" style="left:1153px;top:729px;width:18px;height:17px;background:#fff;border:1px solid #c6c6c6;border-bottom-width:2px"></div>
<svg class="ic" style="left:1156px;top:118px" width="11" height="7" viewBox="0 0 11 7"><path d="M1 5.8L5.5 1.2L10 5.8" fill="none" stroke="#555" stroke-width="1"/></svg>
<svg class="ic" style="left:1156px;top:733px" width="11" height="7" viewBox="0 0 11 7"><path d="M1 1.2L5.5 5.8L10 1.2" fill="none" stroke="#555" stroke-width="1"/></svg>
<div class="a" style="left:1183px;top:149px;width:1px;height:17px;background:#1a7ad4"></div>
<div class="a" style="left:1183px;top:374px;width:1px;height:2px;background:#777"></div>
<div class="a" style="left:1183px;top:402px;width:1px;height:2px;background:#777"></div>
<div class="a" style="left:1183px;top:420px;width:1px;height:2px;background:#777"></div>
<div class="a" style="left:0;top:0;width:1px;height:759px;background:#0b6b36"></div>
<div class="a" style="left:1182px;top:0;width:1px;height:759px;background:#0b6b36"></div>
<div class="a" style="left:0;top:758px;width:1184px;height:1px;background:#0b6b36"></div>
</body></html>
